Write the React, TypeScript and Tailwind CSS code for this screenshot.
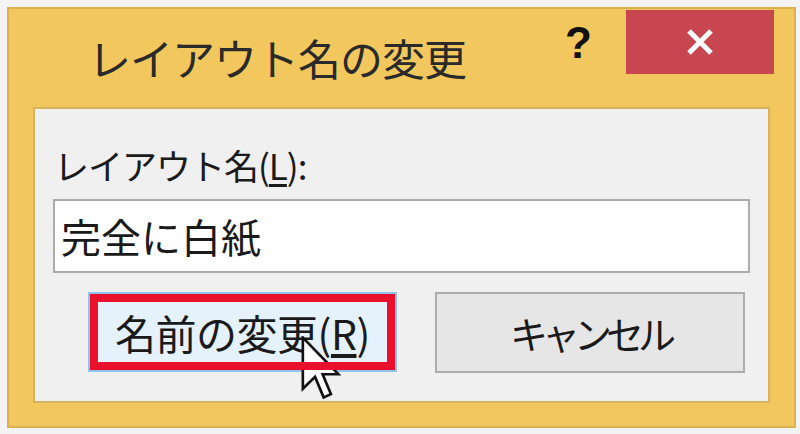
import React from "react";

const jp = { fontFamily: '"Noto Sans CJK JP", "Noto Sans", sans-serif' };

function Cursor() {
  return (
    <svg
      className="absolute left-[301px] top-[336px] z-10"
      width="40"
      height="66"
      viewBox="0 0 12 20"
    >
      <path
        d="M0.5 0.5 L0.5 16 L4.2 12.4 L6.8 18.6 L9 17.6 L6.5 11.6 L11.3 11.6 Z"
        fill="#ffffff"
        stroke="#111111"
        strokeWidth="0.8"
        strokeLinejoin="miter"
      />
    </svg>
  );
}

export default function App() {
  return (
    <div className="relative w-[800px] h-[434px] bg-[#f4f4f4] pt-[7px] pl-[7px] overflow-hidden" style={jp}>
      <div className="w-[789px] h-[421px] border-2 border-[#d9b150] bg-[#f2c85e] flex flex-col">
        {/* title bar */}
        <div className="h-[98px] flex items-start">
          <div className="pl-[79px] pt-[27px] text-[43px] leading-none text-[#2a2a2a] tracking-[-1px]">
            レイアウト名の変更
          </div>
          <div
            className="ml-auto mt-[12px] text-[44px] leading-none font-bold text-[#111]"
            style={{ fontFamily: '"Liberation Sans", Arial, sans-serif' }}
          >
            ?
          </div>
          <div className="ml-[34px] mr-[20px] mt-[1px] w-[148px] h-[64px] bg-[#c8464f] flex items-center justify-center">
            <svg width="30" height="26" viewBox="0 0 30 26">
              <path d="M4 2 L26 24 M26 2 L4 24" stroke="#ffffff" strokeWidth="5" strokeLinecap="butt" />
            </svg>
          </div>
        </div>
        {/* client area */}
        <div className="mx-[24px] mb-[23px] flex-1 border-2 border-[#d8b35e] bg-[#f0f0f0] px-[18px] flex flex-col">
          <div className="pl-[1px] pt-[38px] text-[35px] leading-none text-[#1a1a1a] tracking-[-1px]">
            レイアウト名(<span className="underline underline-offset-[4px]">L</span>):
          </div>
          <div className="mt-[17px] h-[74px] border-2 border-[#acacac] bg-white flex items-center pl-[6px] text-[40px] leading-none text-[#1a1a1a]">
            完全に白紙
          </div>
          <div className="mt-[19px] flex items-start">
            <div className="relative ml-[35px] w-[309px] h-[80px] border-2 border-[#8fc2ee] bg-[#e5f1fb] flex items-center justify-center text-[41px] leading-none text-[#1a1a1a] tracking-[-0.5px]">
              名前の変更(<span className="underline underline-offset-[4px]">R</span>)
              <div className="absolute inset-0 z-20 border-[8px] border-[#e8102c] pointer-events-none" />
            </div>
            <div className="ml-[38px] w-[310px] h-[81px] border-2 border-[#adadad] bg-[#e6e6e6] flex items-center justify-center text-[38px] leading-none text-[#1a1a1a] tracking-[-6px]">
              キャンセル
            </div>
          </div>
        </div>
      </div>
      <Cursor />
    </div>
  );
}
